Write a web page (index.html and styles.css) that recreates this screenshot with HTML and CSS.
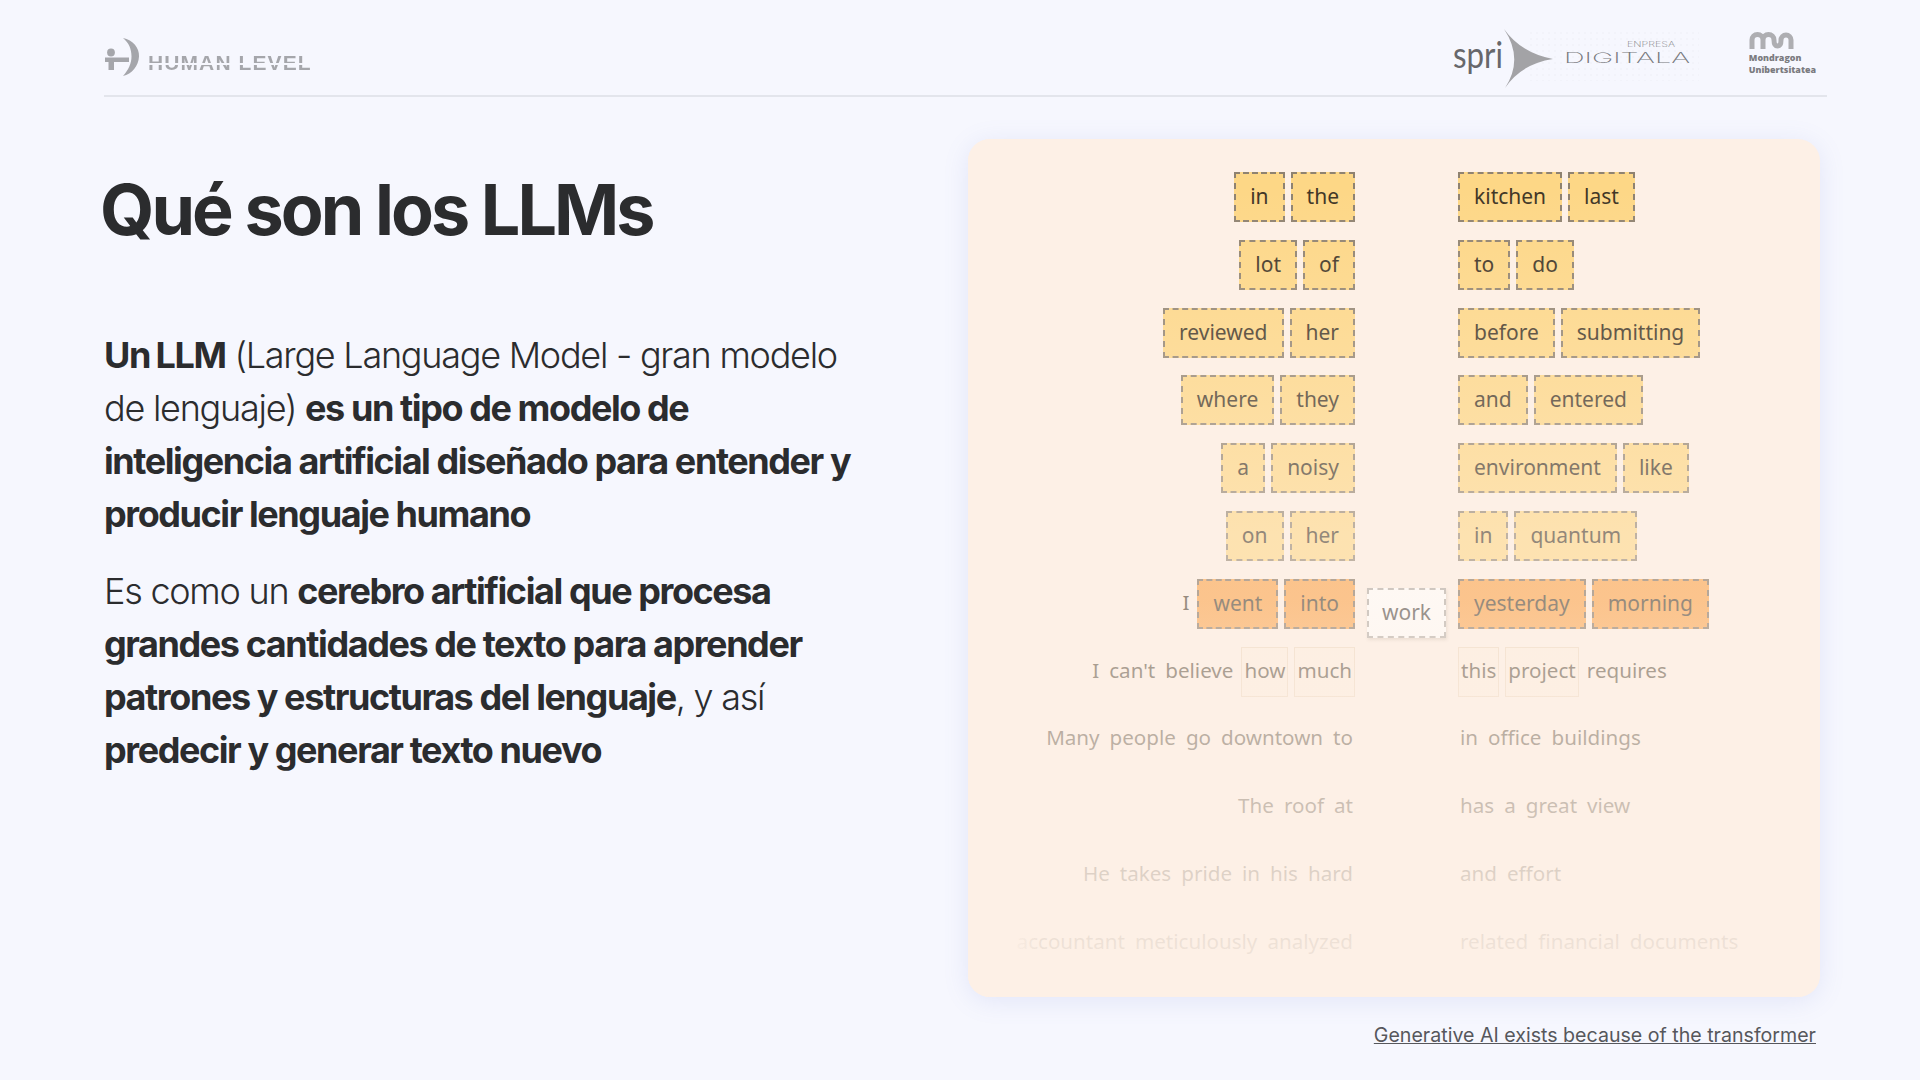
FILE: index.html
```html
<!DOCTYPE html>
<html lang="es">
<head>
<meta charset="utf-8">
<title>Qué son los LLMs</title>
<link rel="stylesheet" href="styles.css">
</head>
<body>
<div class="slide">
  <header class="header">
    <div class="brand">
      <svg class="brand-icon" viewBox="0 0 36 42" width="36" height="42">
        <circle cx="7" cy="16.500" r="3.900" fill="#a5a6ab"/>
        <path d="M1 21.500 H25 V26 H10 V34 H4.500 V26 H1 Z" fill="#a5a6ab"/>
        <path d="M19 2 C29 4 35.500 12 35 20.500 C34.500 30 28 38 19 40 C24.500 34 27.500 27 27.500 20.500 C27.500 13 25 7 19 2 Z" fill="#a5a6ab"/>
      </svg>
      <span class="brand-name">HUMAN LEVEL</span>
    </div>
    <div class="partners">
      <svg class="spri" viewBox="1450 24 250 66" width="250" height="66">
        <defs>
          <pattern id="dots" width="6" height="6" patternUnits="userSpaceOnUse">
            <circle cx="2" cy="2" r="1" fill="#eef0f7"/>
          </pattern>
        </defs>
        <rect x="1530" y="30" width="180" height="50" fill="url(#dots)" opacity="0.7"/>
        <text class="spri-word" x="1454" y="67" textLength="50" lengthAdjust="spacingAndGlyphs">spri</text>
        <path d="M1505 28 Q1522 52 1554 58 Q1522 63 1506 87 Q1525 58 1505 28 Z" fill="#a3a3a6"/>
        <text class="spri-small" x="1628" y="46" textLength="48" lengthAdjust="spacingAndGlyphs">ENPRESA</text>
        <text class="spri-big" x="1565" y="62" textLength="126" lengthAdjust="spacingAndGlyphs">DIGITALA</text>
      </svg>
      <div class="mondragon">
        <svg class="mu-icon" viewBox="0 0 46 18" width="46" height="18">
          <path d="M3 18 V9 A5.500 5.500 0 0 1 14 9 V18 M14 9 A5.500 5.500 0 0 1 25 9 C25 13 26 15 28.500 15 C31 15 32 13 32 9 A5 5 0 0 1 42 9 V18" fill="none" stroke="#aeaeb2" stroke-width="5"/>
        </svg>
        <span class="mu-text">Mondragon<br>Unibertsitatea</span>
      </div>
    </div>
  </header>

  <main class="content">
    <section class="copy">
      <h1 class="title">Qué son los LLMs</h1>
      <p class="para"><strong class="lead">Un LLM</strong> (Large Language Model - gran modelo de lenguaje) <strong>es un tipo de modelo de inteligencia artificial diseñado para entender y producir lenguaje humano</strong></p>
      <p class="para">Es como un <strong>cerebro artificial que procesa grandes cantidades de texto para aprender patrones y estructuras del lenguaje</strong>, y así <strong>predecir y generar texto nuevo</strong></p>
    </section>

    <section class="panel">
      <div class="card">
        <div class="row"><div class="left"><span class="b">in</span><span class="b">the</span></div><div class="mid"></div><div class="right"><span class="b">kitchen</span><span class="b">last</span></div></div>
        <div class="row"><div class="left"><span class="b">lot</span><span class="b">of</span></div><div class="mid"></div><div class="right"><span class="b">to</span><span class="b">do</span></div></div>
        <div class="row"><div class="left"><span class="b">reviewed</span><span class="b">her</span></div><div class="mid"></div><div class="right"><span class="b">before</span><span class="b">submitting</span></div></div>
        <div class="row"><div class="left"><span class="b">where</span><span class="b">they</span></div><div class="mid"></div><div class="right"><span class="b">and</span><span class="b">entered</span></div></div>
        <div class="row"><div class="left"><span class="b">a</span><span class="b">noisy</span></div><div class="mid"></div><div class="right"><span class="b">environment</span><span class="b">like</span></div></div>
        <div class="row"><div class="left"><span class="b">on</span><span class="b">her</span></div><div class="mid"></div><div class="right"><span class="b">in</span><span class="b">quantum</span></div></div>
        <div class="row"><div class="left"><span class="w">I</span><span class="b o">went</span><span class="b o">into</span></div><div class="mid"><span class="target">work</span></div><div class="right"><span class="b o">yesterday</span><span class="b o">morning</span></div></div>
        <div class="row"><div class="left"><span class="w">I</span><span class="w">can't</span><span class="w">believe</span><span class="w f">how</span><span class="w f">much</span></div><div class="mid"></div><div class="right"><span class="w f">this</span><span class="w f">project</span><span class="w">requires</span></div></div>
        <div class="row"><div class="left"><span class="w">Many</span><span class="w">people</span><span class="w">go</span><span class="w">downtown</span><span class="w">to</span></div><div class="mid"></div><div class="right"><span class="w">in</span><span class="w">office</span><span class="w">buildings</span></div></div>
        <div class="row"><div class="left"><span class="w">The</span><span class="w">roof</span><span class="w">at</span></div><div class="mid"></div><div class="right"><span class="w">has</span><span class="w">a</span><span class="w">great</span><span class="w">view</span></div></div>
        <div class="row"><div class="left"><span class="w">He</span><span class="w">takes</span><span class="w">pride</span><span class="w">in</span><span class="w">his</span><span class="w">hard</span></div><div class="mid"></div><div class="right"><span class="w">and</span><span class="w">effort</span></div></div>
        <div class="row"><div class="left"><span class="w">accountant</span><span class="w">meticulously</span><span class="w">analyzed</span></div><div class="mid"></div><div class="right"><span class="w">related</span><span class="w">financial</span><span class="w">documents</span></div></div>
        <div class="fade"></div>
      </div>
      <a class="source" href="#">Generative AI exists because of the transformer</a>
    </section>
  </main>
</div>
</body>
</html>
```

FILE: styles.css
```css
* { box-sizing: border-box; }
html, body { margin: 0; padding: 0; }
body {
  width: 1920px;
  height: 1080px;
  overflow: hidden;
  background: #f6f7fe;
  font-family: "Inter", "Liberation Sans", sans-serif;
  color: #2b2c2e;
}
.slide {
  display: flex;
  flex-direction: column;
  height: 1080px;
  padding: 0 93px 0 104px;
}
.header {
  display: flex;
  justify-content: space-between;
  align-items: flex-end;
  height: 97px;
  border-bottom: 2px solid #e3e5ec;
  flex: none;
}
.brand {
  display: flex;
  align-items: flex-end;
  gap: 8px;
  padding-bottom: 17px;
}
.brand-icon { display: block; }
.brand-name {
  font-family: "Liberation Sans", sans-serif;
  font-weight: 700;
  font-size: 21px;
  line-height: 20px;
  letter-spacing: 1.1px;
  padding-bottom: 5px;
  color: transparent;
  background: linear-gradient(#a5a6ab 0 41%, #f6f7fe 41% 46%, #a5a6ab 46%);
  -webkit-background-clip: text;
  background-clip: text;
}
.partners {
  display: flex;
  align-items: flex-end;
  gap: 50px;
  padding-right: 11px;
  padding-bottom: 4px;
}
.spri { display: block; }
.spri-word { font-family: "Lato", sans-serif; font-weight: 400; font-size: 36px; fill: #67676b; }
.spri-small { font-family: "Inter", sans-serif; font-weight: 200; font-size: 8px; fill: #77777c; }
.spri-big { font-family: "Inter", sans-serif; font-weight: 200; font-size: 14px; fill: #77777c; }
.mondragon {
  display: flex;
  flex-direction: column;
  gap: 3px;
  padding-bottom: 16px;
}
.mu-icon { display: block; }
.mu-text {
  font-family: "Open Sans", sans-serif;
  font-weight: 800;
  font-size: 8.9px;
  line-height: 11.500px;
  color: #7b7b80;
}

.content {
  display: grid;
  grid-template-columns: 864px 1fr;
  flex: 1;
  min-height: 0;
}
.copy { padding-top: 72px; }
.title {
  margin: 0 0 0 -4px;
  font-size: 70px;
  font-weight: 700;
  line-height: 82px;
  letter-spacing: -2.95px;
  color: #2b2c2e;
}
.para {
  margin: 0 0 24px;
  width: 760px;
  font-size: 36px;
  font-weight: 300;
  line-height: 53px;
  letter-spacing: -1.25px;
}
.title + .para { margin-top: 78px; }
.para strong { font-weight: 700; letter-spacing: -1.42px; }
.para .lead { word-spacing: -1.5px; }

.panel {
  display: flex;
  flex-direction: column;
  align-items: flex-end;
  padding-top: 42px;
  padding-right: 7px;
  width: 859px;
}
.card {
  position: relative;
  width: 852px;
  height: 858px;
  padding-top: 33px;
  border-radius: 22px;
  background: #fdf0e6;
  box-shadow: 0 4px 26px rgba(110, 130, 210, 0.14);
  display: grid;
  grid-auto-rows: 67.8px;
  overflow: hidden;
}
.row {
  display: grid;
  grid-template-columns: 387px 103px 1fr;
  align-items: start;
  font-family: "Noto Sans", sans-serif;
  font-size: 21px;
  line-height: 45px;
  color: #403525;
}
.left, .right { display: flex; gap: 6px; height: 50px; }
.left { justify-content: flex-end; }
.mid { display: flex; justify-content: center; }
.b, .w, .target { display: block; height: 50px; border: 1px solid transparent; white-space: nowrap; }
.w { padding: 0 1px; font-size: 20.600px; }
.b {
  padding: 0 14px;
  background: #fdd786;
  border: 2px dashed #8f8270;
}
.b.o { background: #fa9f42; border-color: #7a6a58; }
.f { padding: 0 2px; font-size: 20.600px; border: 1px solid #ecd6bd; background: #fdeedf; }
.target {
  margin-top: 9px;
  padding: 0 13px;
  background: #fff;
  border: 2px dashed #aaa6a1;
  box-shadow: 1px 2px 3px rgba(120, 100, 80, 0.25);
  color: #3f3d3b;
}
.fade {
  position: absolute;
  inset: 0;
  pointer-events: none;
  background:
    linear-gradient(90deg, #fdf0e6 0, #fdf0e6 40px, rgba(253, 240, 230, 0) 74px),
    linear-gradient(180deg,
      rgba(253, 240, 230, 0) 5.5%,
      rgba(253, 240, 230, 0.26) 29%,
      rgba(253, 240, 230, 0.44) 46%,
      rgba(253, 240, 230, 0.46) 54%,
      rgba(253, 240, 230, 0.57) 62%,
      rgba(253, 240, 230, 0.74) 78%,
      rgba(253, 240, 230, 0.84) 86%,
      rgba(253, 240, 230, 0.92) 94%);
}
.source {
  margin-top: 25px;
  padding-right: 4px;
  font-size: 19.6px;
  line-height: 26px;
  font-weight: 400;
  color: #56575c;
  text-decoration: underline;
  white-space: nowrap;
}
```
